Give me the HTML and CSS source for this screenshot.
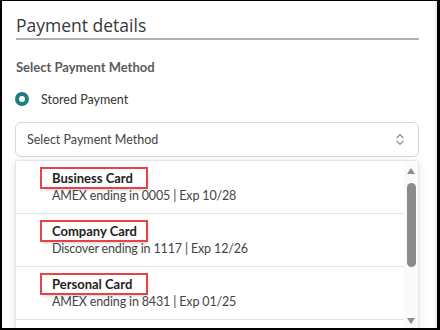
FILE: index.html
```html
<!DOCTYPE html>
<html lang="en">
<head>
  <meta charset="UTF-8">
  <meta name="viewport" content="width=device-width, initial-scale=1.0">
  <title>Payment details</title>
  <link rel="stylesheet" href="styles.css">
</head>
<body>
  <div class="panel">
    <h1 class="title">Payment details</h1>
    <div class="field-label">Select Payment Method</div>
    <label class="radio"><span class="radio-dot"></span>Stored Payment</label>

    <div class="select">
      <span>Select Payment Method</span>
      <svg class="chevrons" width="8" height="13" viewBox="0 0 8 13">
        <path d="M1 4.8 L4 1.8 L7 4.8" />
        <path d="M1 8.2 L4 11.2 L7 8.2" />
      </svg>
    </div>

    <div class="dropdown">
      <ul class="options">
        <li class="option">
          <span class="name"><span class="mark">Business Card</span></span>
          <span class="meta">AMEX ending in 0005 | Exp 10/28</span>
        </li>
        <li class="option">
          <span class="name"><span class="mark">Company Card</span></span>
          <span class="meta">Discover ending in 1117 | Exp 12/26</span>
        </li>
        <li class="option">
          <span class="name"><span class="mark">Personal Card</span></span>
          <span class="meta">AMEX ending in 8431 | Exp 01/25</span>
        </li>
      </ul>
      <div class="scrollbar">
        <span class="arrow up"></span>
        <span class="thumb"></span>
        <span class="arrow down"></span>
      </div>
    </div>
  </div>
</body>
</html>
```

FILE: styles.css
```css
*{
  margin: 0; padding: 0;
}

body{
  background: #fff;
  font-family: Lato, "Liberation Sans", sans-serif;
  font-size: 12.5px;
  color: #333;
}

/* 바깥 틀 */
.panel{
  width: 440px; height: 330px;
  box-sizing: border-box;
  border-style: solid; border-color: #000;
  border-width: 1px 3px 2px 2px;
  padding: 12px 18px 0 14px;
  overflow: hidden;
  box-shadow: inset -2px 0 0 #ededed;
}

/* 제목 */
.title{
  font-family: "Open Sans", Lato, sans-serif;
  font-size: 17.5px; font-weight: 400;
  line-height: 24px;
  color: #383838;
  padding-bottom: 1px;
  border-bottom: 2px solid #abb2b7;
}

.field-label{
  margin-top: 18px;
  font-size: 13px;
  font-weight: bold; line-height: 18px;
  color: #585c60;
}

/* 라디오 */
.radio{
  display: flex; align-items: center;
  margin-top: 14px; margin-left: -1px;
  height: 18px;
  color: #333;
}
.radio-dot{
  width: 14px; height: 14px;
  box-sizing: border-box;
  border: 4.5px solid #1b7e84;
  border-radius: 50%;
  background: #fff;
  margin-right: 12px;
}

/* 셀렉트 */
.select{
  display: flex; align-items: center;
  justify-content: space-between;
  margin-top: 14px; margin-left: -1px;
  height: 35px; box-sizing: border-box;
  border: 1px solid #d4d5dc;
  border-radius: 6px;
  padding: 0 14px 0 11px;
  color: #444;
}
.chevrons path{
  fill: none;
  stroke: #8c90a0; stroke-width: 1.3;
  stroke-linecap: round; stroke-linejoin: round;
}

/* 목록 */
.dropdown{
  display: flex;
  margin-top: 3px; margin-left: -1px;
  height: 180px;
  border: 1px solid #e6e6e6;
  border-radius: 3px;
  box-shadow: 0 2px 8px rgba(0, 0, 0, 0.12);
  background: #fff;
}
.options{
  flex: 1;
  list-style: none;
}
.option{
  padding: 8px 0 8px 36px;
  border-bottom: 1px solid #e3e3e3;
}
.name{
  display: block;
  font-size: 13px;
  line-height: 18px;
  font-weight: bold; color: #222;
}
.mark{
  display: inline-block;
  width: 104px; box-sizing: border-box;
  padding-left: 10px; margin-left: -10px;
  outline: 2px solid #e8414a;
  box-shadow: 1px 2px 4px rgba(0, 0, 0, 0.3);
}
.meta{
  display: block;
  line-height: 18px;
  letter-spacing: -0.15px;
  color: #444;
}

/* 스크롤바 */
.scrollbar{
  width: 14px;
  background: #fafafa;
  display: flex; flex-direction: column;
  align-items: center;
}
.arrow{
  width: 0; height: 0;
  border-left: 4.5px solid transparent;
  border-right: 4.5px solid transparent;
}
.arrow.up{
  margin-top: 7px;
  border-bottom: 6px solid #8d8d8d;
}
.thumb{
  margin-top: 9px;
  width: 9px; height: 84px;
  border-radius: 5px;
  background: #8b8b8b;
}
.arrow.down{
  margin-top: 51px;
  border-top: 6px solid #8d8d8d;
}
```
